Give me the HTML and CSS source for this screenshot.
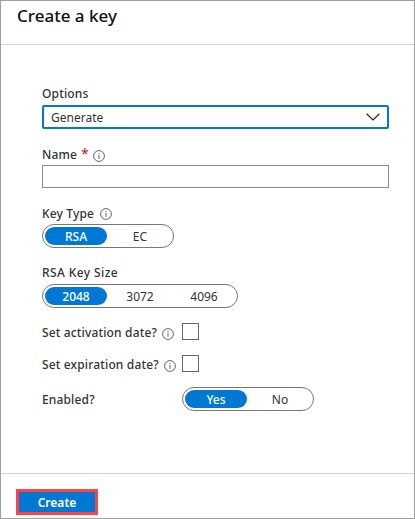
FILE: index.html
```html
<!DOCTYPE html>
<html lang="en">
<head>
<meta charset="utf-8">
<title>Create a key</title>
<link rel="stylesheet" href="styles.css">
</head>
<body>
<main class="panel">
  <header class="header"><h1 class="title">Create a key</h1></header>
  <form class="form">
    <div class="field options">
      <div class="label"><span class="t-options">Options</span></div>
      <div class="select"><span class="t-generate">Generate</span>
        <svg class="chevron" width="14" height="8" viewBox="0 0 14 8"><path d="M.6.8 7 7 13.4.8" fill="none" stroke="#222" stroke-width="1.2"/></svg>
      </div>
    </div>
    <div class="field name">
      <div class="label"><span class="t-name">Name</span><span class="required">*</span>
        <svg class="info" width="12" height="12" viewBox="0 0 12 12"><circle cx="6" cy="6" r="5.4"/><path d="M6 5v4M6 3v1"/></svg>
      </div>
      <input class="input" type="text" aria-label="Name">
    </div>
    <div class="field type">
      <div class="label"><span class="t-type">Key Type</span>
        <svg class="info" width="12" height="12" viewBox="0 0 12 12"><circle cx="6" cy="6" r="5.4"/><path d="M6 5v4M6 3v1"/></svg>
      </div>
      <div class="toggle"><span class="choice selected">RSA</span><span class="choice">EC</span></div>
    </div>
    <div class="field size">
      <div class="label"><span class="t-size">RSA Key Size</span></div>
      <div class="toggle numbers"><span class="choice selected">2048</span><span class="choice">3072</span><span class="choice">4096</span></div>
    </div>
    <div class="row activation">
      <div class="label"><span class="t-activation">Set activation date?</span>
        <svg class="info" width="12" height="12" viewBox="0 0 12 12"><circle cx="6" cy="6" r="5.4"/><path d="M6 5v4M6 3v1"/></svg>
      </div>
      <span class="checkbox"></span>
    </div>
    <div class="row expiration">
      <div class="label"><span class="t-expiration">Set expiration date?</span>
        <svg class="info" width="12" height="12" viewBox="0 0 12 12"><circle cx="6" cy="6" r="5.4"/><path d="M6 5v4M6 3v1"/></svg>
      </div>
      <span class="checkbox"></span>
    </div>
    <div class="row enabled">
      <div class="label"><span class="t-enabled">Enabled?</span></div>
      <div class="toggle"><span class="choice selected">Yes</span><span class="choice">No</span></div>
    </div>
  </form>
  <footer class="footer"><button class="create" type="button">Create</button></footer>
</main>
</body>
</html>
```
FILE: styles.css
```css
* { box-sizing: border-box; }
body { margin: 0; background: #fff; font-family: "Noto Sans", "Open Sans", sans-serif; font-size: 12px; color: #333; }
.panel { width: 415px; height: 519px; border: 1px solid #a0a0a0; display: flex; flex-direction: column; }
.header { height: 44px; border-bottom: 1px solid #d2d2d2; padding: 3px 0 0 16px; }
.title { margin: 0; font-size: 17px; line-height: 24px; font-weight: 500; color: #111; white-space: nowrap; }
.form { flex: 1; padding: 38px 25px 0 41px; }
.label { display: flex; align-items: center; height: 20px; padding-top: 1px; line-height: 19px; font-weight: 500; white-space: nowrap; letter-spacing: .15px; }
.info { flex: none; margin: 2px 0 0 5px; fill: none; stroke: #666; stroke-width: 1; }
.required { color: #b4262c; margin: -2px 0 0 4px; font-size: 14px; font-weight: 400; }
.options .label, .size .label { margin-bottom: 2px; }
.t-size { letter-spacing: .4px; }
.name .label, .type .label { margin-bottom: 1px; }
.name .info { margin-left: 4px; }
.type .info { margin: 1px 0 0 6px; }
.select { display: flex; align-items: center; justify-content: space-between; height: 24px; border: 2px solid #0078d4; border-radius: 2px; padding: 0 7px; }
.name { margin-top: 15px; }
.input { display: block; width: 100%; height: 23px; border: 1px solid #8a8a8a; margin: 0; padding: 0 7px; font: inherit; outline: 0; }
.type { margin-top: 15px; }
.toggle { display: flex; width: max-content; height: 24px; border: 1px solid #777; border-radius: 12px; padding: 2px; }
.choice { width: 64px; height: 18px; padding-left: 2px; text-align: center; line-height: 19px; border-radius: 9px; }
.selected { width: 62px; padding-left: 0; color: #fff; background: #0078d4; font-weight: 500; }
.size { margin-top: 14px; }
.row { display: grid; grid-template-columns: 140px max-content; align-items: center; }
.activation { margin-top: 14px; }
.expiration { margin-top: 12px; }
.checkbox { width: 17px; height: 17px; margin-bottom: 2px; border: 1px solid #666; }
.enabled { margin-top: 13px; }
.footer { height: 45px; border-top: 1px solid #d2d2d2; padding: 15px 0 0 15px; }
.create { display: block; width: 82px; height: 26px; padding: 0; border: 3px solid #ff4343; background: #0078d4; color: #fff; font: 600 12px/19px "Noto Sans", sans-serif; }
```
